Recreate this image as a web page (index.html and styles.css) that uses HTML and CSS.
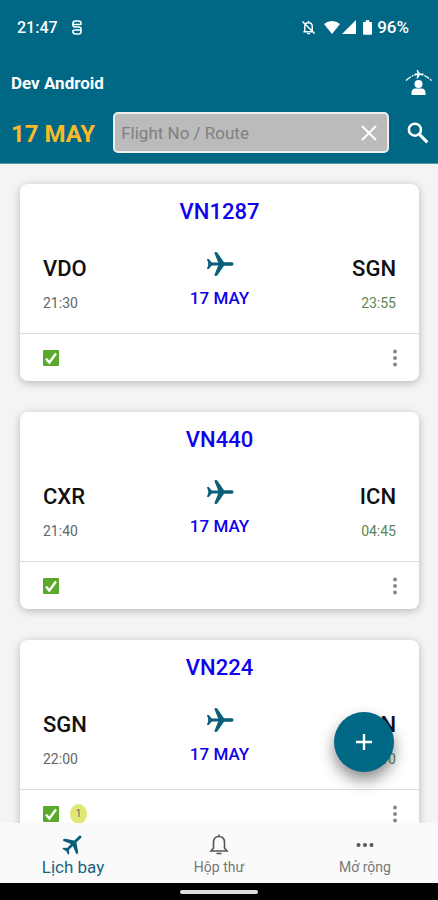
FILE: index.html
```html
<!DOCTYPE html>
<html lang="vi">
<head>
    <meta charset="UTF-8">
    <meta name="viewport" content="width=device-width, initial-scale=1.0">
    <title>Lịch bay</title>
    <link rel="stylesheet" href="styles.css">
</head>
<body>
    <!-- Shared icons -->
    <svg class="icon-defs" aria-hidden="true">
        <symbol id="plane" viewBox="0 0 28 26">
            <path d="M1 8h1.800l3 3.400h6.400L8.600 2.500Q8.200 1 9.500 1h.5q1 0 1.600 1L18 11.300h8q1.500 0 1.500 1.700t-1.500 1.700h-8L11.600 24q-.6 1-1.600 1h-.5q-1.300 0-.9-1.500l3.600-8.900H5.800L2.800 18H1l1.400-5z"/>
        </symbol>
        <symbol id="check" viewBox="0 0 16 16">
            <rect width="16" height="16" rx="1" fill="#5aa82d"/>
            <path d="M3 8.500l3.300 4L13 3.500" fill="none" stroke="#fff" stroke-width="2.400"/>
        </symbol>
        <symbol id="dots" viewBox="0 0 4 18">
            <circle cx="2" cy="2.500" r="2"/>
            <circle cx="2" cy="9" r="2"/>
            <circle cx="2" cy="15.500" r="2"/>
        </symbol>
    </svg>

    <div class="app">
        <header class="header">
            <div class="status-bar">
                <span class="status-time">21:47</span>
                <svg class="status-app" viewBox="0 0 12 15" fill="none" stroke="currentColor" stroke-width="1.600">
                    <path d="M10 5V3.500Q10 1 7.500 1h-3Q2 1 2 3.500V5q0 2 2 2h4q2 0 2 2v2.500q0 2.500-2.500 2.500h-3Q2 14 2 11.500V10M1 4.500h8.500M2.500 10H10"/>
                </svg>
                <div class="status-icons">
                    <svg class="status-bell" viewBox="0 0 16 16" fill="none" stroke="currentColor" stroke-width="1.500">
                        <path d="M2.500 12.500h11M4 12V7q0-4 4-4t4 4v5M8 1v2M6.500 14.500h3M1.500 1.500l13 13"/>
                    </svg>
                    <svg class="status-wifi" viewBox="0 0 16 14" fill="currentColor">
                        <path d="M8 14L0 4Q3.500 1 8 1t8 3z"/>
                    </svg>
                    <svg class="status-signal" viewBox="0 0 14 14" fill="currentColor">
                        <path d="M14 0v14H0z"/>
                    </svg>
                    <svg class="status-battery" viewBox="0 0 10 16" fill="currentColor">
                        <path d="M3 0h4v2h2q1 0 1 1v12q0 1-1 1H1q-1 0-1-1V3q0-1 1-1h2z"/>
                    </svg>
                    <span class="status-level">96%</span>
                </div>
            </div>

            <div class="title-row">
                <h1 class="user-name">Dev Android</h1>
                <button class="icon-button" type="button" aria-label="Crew">
                    <svg class="crew-icon" viewBox="0 0 28 28" fill="currentColor">
                        <path d="M1 11.500Q14-1 27 12" fill="none" stroke="currentColor" stroke-width="1.300" stroke-dasharray="6 1 2 1"/>
                        <path d="M9.500 4.500h3L11.500 1h1.200l2.300 3.500h3.500v1.500H15L12.700 9.500h-1.200l1-3.500h-3z"/>
                        <circle cx="13.500" cy="15" r="4"/>
                        <path d="M6.500 26v-2q0-4.500 4-4.500h6q4 0 4 4.500v2z"/>
                    </svg>
                </button>
            </div>

            <form class="search-row">
                <span class="today">17 MAY</span>
                <div class="search-box">
                    <input class="search-input" type="text" placeholder="Flight No / Route" aria-label="Flight No / Route">
                    <button class="icon-button" type="reset" aria-label="Clear">
                        <svg class="clear-icon" viewBox="0 0 16 16" fill="none" stroke="currentColor" stroke-width="2">
                            <path d="M1 1l14 14M15 1L1 15"/>
                        </svg>
                    </button>
                </div>
                <button class="icon-button" type="submit" aria-label="Search">
                    <svg class="search-icon" viewBox="0 0 20 20" fill="none" stroke="currentColor">
                        <circle cx="7.200" cy="7" r="5.500" stroke-width="2.300"/>
                        <path d="M11.500 11.500l7 7" stroke-width="2.800"/>
                    </svg>
                </button>
            </form>
        </header>

        <main class="flights">
            <article class="flight-card">
                <h2 class="flight-no">VN1287</h2>
                <div class="route">
                    <div class="stop">
                        <span class="airport">VDO</span>
                        <time class="time">21:30</time>
                    </div>
                    <div class="leg">
                        <svg class="plane-icon"><use href="#plane"/></svg>
                        <span class="leg-date">17 MAY</span>
                    </div>
                    <div class="stop arrival">
                        <span class="airport">SGN</span>
                        <time class="time">23:55</time>
                    </div>
                </div>
                <footer class="card-footer">
                    <svg class="check-icon"><use href="#check"/></svg>
                    <button class="icon-button more" type="button" aria-label="More"><svg class="dots-icon"><use href="#dots"/></svg></button>
                </footer>
            </article>

            <article class="flight-card">
                <h2 class="flight-no">VN440</h2>
                <div class="route">
                    <div class="stop">
                        <span class="airport">CXR</span>
                        <time class="time">21:40</time>
                    </div>
                    <div class="leg">
                        <svg class="plane-icon"><use href="#plane"/></svg>
                        <span class="leg-date">17 MAY</span>
                    </div>
                    <div class="stop arrival">
                        <span class="airport">ICN</span>
                        <time class="time">04:45</time>
                    </div>
                </div>
                <footer class="card-footer">
                    <svg class="check-icon"><use href="#check"/></svg>
                    <button class="icon-button more" type="button" aria-label="More"><svg class="dots-icon"><use href="#dots"/></svg></button>
                </footer>
            </article>

            <article class="flight-card">
                <h2 class="flight-no">VN224</h2>
                <div class="route">
                    <div class="stop">
                        <span class="airport">SGN</span>
                        <time class="time">22:00</time>
                    </div>
                    <div class="leg">
                        <svg class="plane-icon"><use href="#plane"/></svg>
                        <span class="leg-date">17 MAY</span>
                    </div>
                    <div class="stop arrival">
                        <span class="airport">HAN</span>
                        <time class="time">00:10</time>
                    </div>
                </div>
                <footer class="card-footer">
                    <svg class="check-icon"><use href="#check"/></svg>
                    <span class="note-count">1</span>
                    <button class="icon-button more" type="button" aria-label="More"><svg class="dots-icon"><use href="#dots"/></svg></button>
                </footer>
            </article>
        </main>

        <nav class="tab-bar">
            <button class="add-button" type="button" aria-label="Add">
                <svg class="add-icon" viewBox="0 0 16 16" fill="none" stroke="currentColor" stroke-width="2.400">
                    <path d="M8 0v16M0 8h16"/>
                </svg>
            </button>
            <a class="tab active" href="#">
                <svg class="tab-icon tab-plane"><use href="#plane"/></svg>
                Lịch bay
            </a>
            <a class="tab" href="#">
                <svg class="tab-icon" viewBox="0 0 20 22" fill="none" stroke="currentColor" stroke-width="1.600">
                    <path d="M2 18h16l-2.500-3V9.500q0-6-5.500-6t-5.500 6V15zM10 1.500v2M7.500 20.500h5"/>
                </svg>
                Hộp thư
            </a>
            <a class="tab" href="#">
                <svg class="tab-icon" viewBox="0 0 20 22" fill="currentColor">
                    <circle cx="3.500" cy="12" r="2"/>
                    <circle cx="10" cy="12" r="2"/>
                    <circle cx="16.500" cy="12" r="2"/>
                </svg>
                Mở rộng
            </a>
        </nav>
        <div class="gesture-bar"></div>
    </div>
</body>
</html>
```
FILE: styles.css
```css
* {
    box-sizing: border-box;
}

body {
    margin: 0;
    font-family: Roboto, "Noto Sans", sans-serif;
    background: #f4f4f4;
    color: #111;
}

.icon-defs {
    display: none;
}

.app {
    display: flex;
    flex-direction: column;
    height: 100vh;
}

.icon-button {
    display: flex;
    padding: 0;
    border: 0;
    background: none;
    color: inherit;
    cursor: pointer;
}

/* Header */
.header {
    background: #006885;
    color: #fff;
    padding-bottom: 10px;
    border-bottom: 1px solid #5793a5;
    flex-shrink: 0;
}

.status-bar {
    display: flex;
    align-items: center;
    height: 54px;
    padding: 0 29px 0 17px;
    font-size: 17px;
    font-weight: 500;
}

.status-time {
    font-size: 16px;
}

.status-app {
    width: 12px;
    height: 15px;
    margin-left: 13px;
}

.status-icons {
    display: flex;
    align-items: center;
    margin-left: auto;
}

.status-bell {
    width: 15px;
    height: 15px;
    margin-right: 8px;
}

.status-wifi {
    width: 16px;
    height: 14px;
    margin-right: 2px;
}

.status-signal {
    width: 14px;
    height: 14px;
    margin-right: 7px;
}

.status-battery {
    width: 9px;
    height: 15px;
    margin-right: 5px;
}

.title-row {
    display: flex;
    align-items: center;
    justify-content: space-between;
    height: 58px;
    padding: 0 5px 0 11px;
}

.user-name {
    margin: 0;
    font-size: 17px;
    font-weight: 700;
}

.crew-icon {
    width: 28px;
    height: 28px;
}

.search-row {
    display: flex;
    align-items: center;
    gap: 18px;
    padding: 0 9px 0 11px;
}

.today {
    font-size: 24px;
    line-height: 32px;
    padding-top: 2px;
    font-weight: 700;
    color: #f9b928;
}

.search-box {
    flex: 1;
    display: flex;
    align-items: center;
    min-width: 0;
    height: 41px;
    padding: 0 10px 0 6px;
    background: #bbb;
    border: 2px solid #eee;
    border-radius: 5px;
}

.search-input {
    flex: 1;
    min-width: 0;
    padding: 0;
    border: 0;
    background: none;
    font-family: inherit;
    font-size: 17px;
    color: #333;
    outline: none;
}

.search-input::placeholder {
    color: #808080;
}

.clear-icon {
    width: 16px;
    height: 16px;
}

.search-icon {
    width: 22px;
    height: 22px;
}

/* Flight list */
.flights {
    flex: 1;
    min-height: 0;
    overflow: hidden;
    padding: 20px 19px 0 20px;
}

.flight-card {
    margin-bottom: 31px;
    background: #fff;
    border-radius: 8px;
    box-shadow: 0 2px 8px rgba(0, 0, 0, 0.25);
}

.flight-no {
    margin: 0;
    padding-top: 15px;
    font-size: 22px;
    line-height: 26px;
    font-weight: 500;
    text-align: center;
    color: #1000ee;
}

.route {
    display: flex;
    height: 108px;
    padding: 26px 23px 0;
}

.stop {
    flex: 1;
    display: flex;
    flex-direction: column;
    padding-top: 5px;
}

.airport {
    font-size: 22px;
    line-height: 26px;
    font-weight: 500;
}

.time {
    margin-top: 12px;
    font-size: 14px;
    line-height: 18px;
    color: #666;
}

.arrival {
    text-align: right;
}

.arrival .time {
    color: #5b8558;
}

.leg {
    display: flex;
    flex-direction: column;
    align-items: center;
}

.plane-icon {
    width: 28px;
    height: 26px;
    fill: #0b5f78;
}

.leg-date {
    margin-top: 11px;
    font-size: 17px;
    line-height: 20px;
    font-weight: 500;
    color: #1000ee;
}

.card-footer {
    display: flex;
    align-items: center;
    height: 48px;
    padding: 0 22px 0 23px;
    border-top: 1px solid #ddd;
}

.check-icon {
    width: 16px;
    height: 16px;
}

.note-count {
    margin-left: 11px;
    width: 17px;
    height: 20px;
    border-radius: 50%;
    background: #dfe873;
    color: #666;
    font-size: 10px;
    line-height: 20px;
    text-align: center;
}

.more {
    margin-left: auto;
}

.dots-icon {
    width: 4px;
    height: 18px;
    fill: #888;
}

/* Bottom navigation */
.tab-bar {
    position: relative;
    display: flex;
    flex-shrink: 0;
    height: 60px;
    background: #fafafa;
}

.tab {
    flex: 1;
    display: flex;
    flex-direction: column;
    align-items: center;
    padding-top: 10px;
    font-size: 14px;
    line-height: 24px;
    color: #777;
    text-decoration: none;
}

.tab.active {
    font-size: 17px;
    color: #1b647d;
}

.tab-icon {
    width: 20px;
    height: 22px;
    color: #555;
}

.tab-plane {
    width: 24px;
    fill: #0b5f78;
    transform: rotate(-45deg);
}

.add-button {
    position: absolute;
    right: 44px;
    bottom: 111px;
    display: flex;
    align-items: center;
    justify-content: center;
    width: 60px;
    height: 60px;
    padding: 0;
    border: 0;
    border-radius: 50%;
    background: #006885;
    color: #fff;
    box-shadow: 0 8px 15px rgba(0, 0, 0, 0.45);
    cursor: pointer;
}

.add-icon {
    width: 16px;
    height: 16px;
}

.gesture-bar {
    display: flex;
    align-items: center;
    justify-content: center;
    flex-shrink: 0;
    height: 17px;
    background: #000;
}

.gesture-bar::before {
    content: "";
    width: 78px;
    height: 4px;
    border-radius: 2px;
    background: #ddd;
}
```
